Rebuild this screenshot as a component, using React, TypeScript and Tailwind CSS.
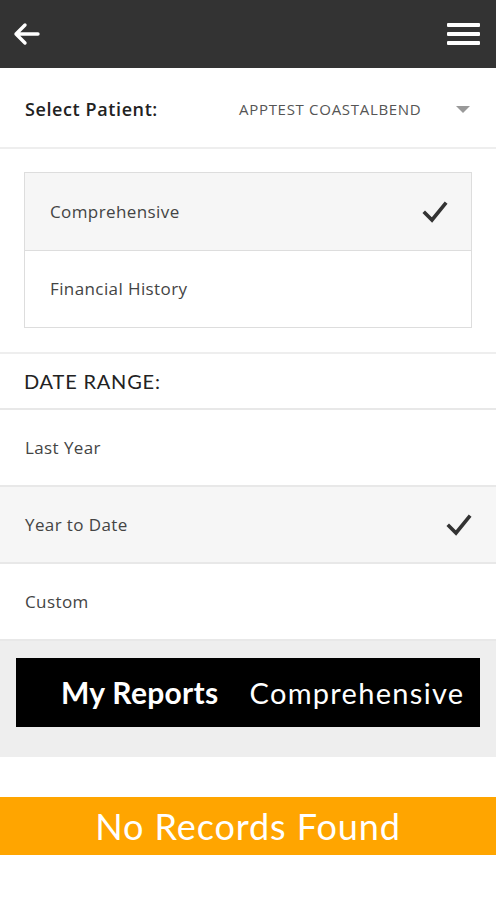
import React from 'react';

const FONT = { fontFamily: '"Open Sans", "Noto Sans", sans-serif' };
const ROUND = { fontFamily: 'Lato, "Noto Sans", sans-serif' };

function Check() {
  return (
    <svg width="26" height="24" viewBox="0 0 26 24" fill="none">
      <path d="M3 13 L10 20 L23 4" stroke="#333" strokeWidth="3.6" strokeLinecap="square" />
    </svg>
  );
}

const REPORTS = [
  { id: 'comp', label: 'Comprehensive', selected: true },
  { id: 'fin', label: 'Financial History', selected: false },
];

const RANGES = [
  { id: 'last', label: 'Last Year', selected: false },
  { id: 'ytd', label: 'Year to Date', selected: true },
  { id: 'custom', label: 'Custom', selected: false },
];

export default function App() {
  return (
    <div className="w-[496px] h-[900px] bg-white flex flex-col" style={FONT}>
      <header className="h-[68px] bg-[#333333] flex items-center justify-between pl-[12px] pr-[15px] shrink-0">
        <svg width="28" height="24" viewBox="0 0 28 24" fill="none">
          <path d="M26 12 H4 M13 3 L4 12 L13 21" stroke="#fff" strokeWidth="3.4" strokeLinecap="round" strokeLinejoin="round" />
        </svg>
        <svg width="34" height="24" viewBox="0 0 34 24">
          <rect x="0" y="1" width="33" height="4" rx="1" fill="#fff" />
          <rect x="0" y="10" width="33" height="4" rx="1" fill="#fff" />
          <rect x="0" y="19" width="33" height="4" rx="1" fill="#fff" />
        </svg>
      </header>

      <div className="h-[81px] flex items-center pt-[4px] pl-[25px] pr-[26px] border-b-2 border-[#eeeeee] shrink-0">
        <span className="text-[18px] font-semibold text-[#222] tracking-[0.6px] w-[214px]">Select Patient:</span>
        <span className="text-[15px] text-[#555] tracking-[0.7px] flex-1">APPTEST COASTALBEND</span>
        <svg width="14" height="8" viewBox="0 0 14 8">
          <path d="M0 0 H14 L7 7 Z" fill="#999" />
        </svg>
      </div>

      <div className="px-[24px] pt-[23px] pb-[24px] border-b-2 border-[#eeeeee] shrink-0">
        <div className="border border-[#dddddd]">
          {REPORTS.map((r, i) => (
            <div
              key={r.id}
              className={`h-[77px] flex items-center justify-between pl-[25px] pr-[23px] ${r.selected ? 'bg-[#f6f6f6]' : 'bg-white'} ${i > 0 ? 'border-t border-[#dddddd]' : ''}`}
            >
              <span className="text-[17px] text-[#444] tracking-[0.4px]">{r.label}</span>
              {r.selected && <Check />}
            </div>
          ))}
        </div>
      </div>

      <div className="h-[56px] flex items-center pl-[24px] border-b-2 border-[#e8e8e8] shrink-0">
        <span className="text-[20px] text-[#222] tracking-[0.8px]" style={ROUND}>
          DATE RANGE:
        </span>
      </div>

      <div className="shrink-0">
        {RANGES.map((r) => (
          <div
            key={r.id}
            className={`h-[77px] flex items-center justify-between pl-[25px] pr-[24px] border-b-2 border-[#e8e8e8] ${r.selected ? 'bg-[#f6f6f6]' : 'bg-white'}`}
          >
            <span className="text-[17px] text-[#444] tracking-[0.4px]">{r.label}</span>
            {r.selected && <Check />}
          </div>
        ))}
      </div>

      <div className="bg-[#eeeeee] h-[116px] px-[16px] pt-[17px] shrink-0" style={ROUND}>
        <div className="h-[69px] bg-black flex items-center pl-[45px] gap-[31px]">
          <span className="text-[30px] font-bold text-white tracking-[0.3px]">My Reports</span>
          <span className="text-[29px] text-white tracking-[1.3px]">Comprehensive</span>
        </div>
      </div>

      <div className="h-[40px] shrink-0" />

      <div className="h-[58px] bg-[#ffa500] flex items-center justify-center shrink-0" style={ROUND}>
        <span className="text-[36px] text-white tracking-[0.9px]">No Records Found</span>
      </div>
    </div>
  );
}
